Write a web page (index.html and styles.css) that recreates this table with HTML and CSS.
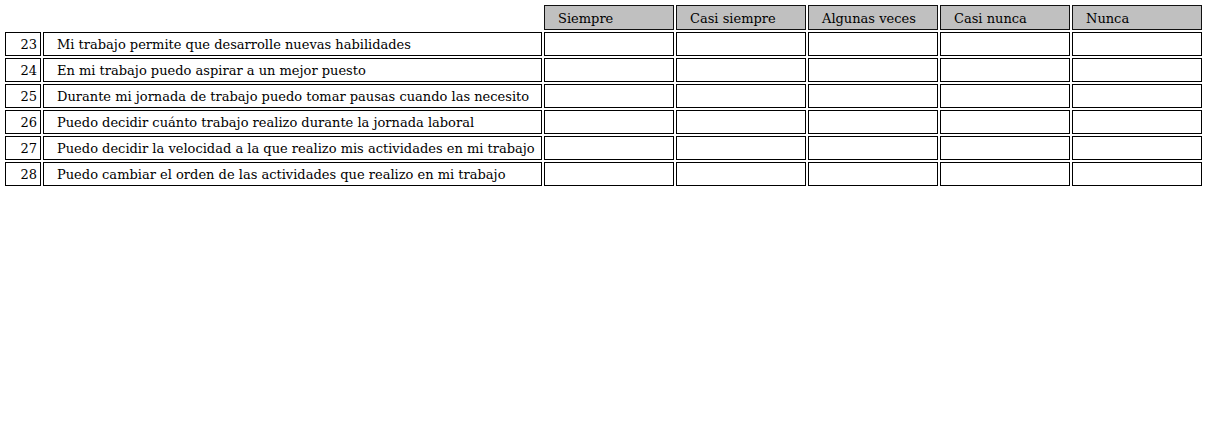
FILE: index.html
```html
<!DOCTYPE html>
<html lang="es">
<head>
<meta charset="utf-8">
<title>Cuestionario</title>
<link rel="stylesheet" href="styles.css">
</head>
<body>
<table class="survey">
  <colgroup>
    <col class="c-num">
    <col class="c-text">
    <col class="c-opt">
    <col class="c-opt">
    <col class="c-opt">
    <col class="c-opt">
    <col class="c-opt">
  </colgroup>
  <thead>
    <tr>
      <th class="blank"></th>
      <th class="blank"></th>
      <th class="opt-head">Siempre</th>
      <th class="opt-head">Casi siempre</th>
      <th class="opt-head">Algunas veces</th>
      <th class="opt-head">Casi nunca</th>
      <th class="opt-head">Nunca</th>
    </tr>
  </thead>
  <tbody>
    <tr><td class="num">23</td><td class="q">Mi trabajo permite que desarrolle nuevas habilidades</td><td></td><td></td><td></td><td></td><td></td></tr>
    <tr><td class="num">24</td><td class="q">En mi trabajo puedo aspirar a un mejor puesto</td><td></td><td></td><td></td><td></td><td></td></tr>
    <tr><td class="num">25</td><td class="q">Durante mi jornada de trabajo puedo tomar pausas cuando las necesito</td><td></td><td></td><td></td><td></td><td></td></tr>
    <tr><td class="num">26</td><td class="q">Puedo decidir cuánto trabajo realizo durante la jornada laboral</td><td></td><td></td><td></td><td></td><td></td></tr>
    <tr><td class="num">27</td><td class="q">Puedo decidir la velocidad a la que realizo mis actividades en mi trabajo</td><td></td><td></td><td></td><td></td><td></td></tr>
    <tr><td class="num">28</td><td class="q">Puedo cambiar el orden de las actividades que realizo en mi trabajo</td><td></td><td></td><td></td><td></td><td></td></tr>
  </tbody>
</table>
</body>
</html>
```
FILE: styles.css
```css
html, body {
  background: #fff;
}
body {
  margin: 3px;
  font-family: "DejaVu Serif", "Liberation Serif", serif;
  font-size: 13px;
  color: #000;
}
.survey {
  border-collapse: separate;
  border-spacing: 2px;
  table-layout: fixed;
  width: 1201px;
}
.c-num { width: 36px; }
.c-text { width: 499px; }
.c-opt { width: 130px; }

.survey th,
.survey td {
  box-sizing: border-box;
  height: 24px;
  border: 1px solid #000;
  padding: 2px 0 0 13px;
  text-align: left;
  font-weight: normal;
  white-space: nowrap;
  vertical-align: middle;
  line-height: 16px;
}
.survey thead th {
  height: 25px;
}
.survey th.blank {
  border: none;
}
.survey th.opt-head {
  background: #c0c0c0;
  border-color: #111;
}
.survey td.num {
  text-align: right;
  padding: 2px 3px 0 0;
}
.survey td.q {
  padding-left: 13px;
}
```
